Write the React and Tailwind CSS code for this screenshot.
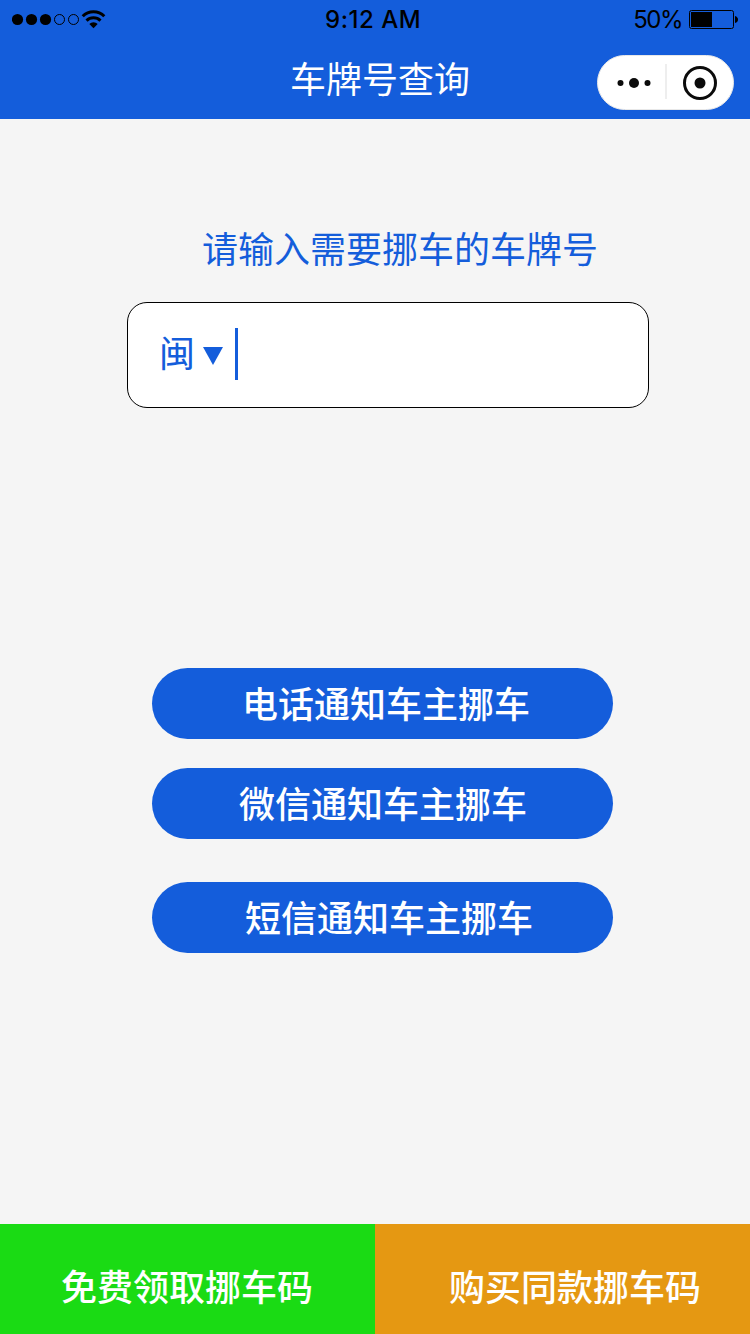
import { useState } from "react";

const notifyButtons = [
  { id: "phone", label: "电话通知车主挪车", className: "pl-[90px]" },
  { id: "wechat", label: "微信通知车主挪车", className: "mt-[29px] pl-[87px]" },
  { id: "sms", label: "短信通知车主挪车", className: "mt-[43px] pl-[93px]" },
];

function StatusBar() {
  return (
    <div className="flex h-10 items-start justify-between pl-3 pr-3 font-['Inter',sans-serif] text-black">
      <svg width="96" height="40" viewBox="12 0 96 40">
        <circle cx="17.5" cy="19.5" r="5.6" />
        <circle cx="31.5" cy="19.5" r="5.6" />
        <circle cx="45.5" cy="19.5" r="5.6" />
        <circle cx="59.5" cy="19.5" r="5" fill="none" stroke="#000" />
        <circle cx="73.5" cy="19.5" r="5" fill="none" stroke="#000" />
        <path d="M82.7 16.3a15 15 0 0 1 21.6 0" fill="none" stroke="#000" strokeWidth="3" />
        <path d="M86.5 20.6a10 10 0 0 1 14 0" fill="none" stroke="#000" strokeWidth="3" />
        <path d="M89.3 24a6 6 0 0 1 8.4 0l-4.2 4.2z" />
      </svg>
      <span className="ml-[5px] text-[24px] leading-10 font-medium tracking-[0.5px]">9:12 AM</span>
      <div className="flex items-center gap-[7px]">
        <span className="text-[24px] leading-10 tracking-[-1.5px]">50%</span>
        <svg width="49" height="40" viewBox="689 0 49 40">
          <rect x="689.5" y="10.5" width="44" height="18" rx="2" fill="none" stroke="#000" />
          <rect x="691" y="12" width="21" height="15" />
          <path d="M735 16q3 1 3 3.5t-3 3.5z" />
        </svg>
      </div>
    </div>
  );
}

function NavBar() {
  return (
    <div className="flex h-[79px] items-start justify-between pl-[290px] pr-4">
      <h1 className="mt-[11px] text-[36px] leading-[52px] text-white">车牌号查询</h1>
      <div className="mt-[15px] flex h-[55px] w-[137px] items-center rounded-full border border-[#e8e8e8] bg-white">
        <button className="flex h-full w-[67px] items-center justify-center pl-[5px]">
          <svg width="34" height="12" viewBox="0 0 34 12" fill="#0b0b0b">
            <circle cx="3.5" cy="6" r="3" />
            <circle cx="17" cy="6" r="5" />
            <circle cx="30.5" cy="6" r="3" />
          </svg>
        </button>
        <div className="-mt-[2px] h-[35px] w-[2px] bg-[#eeeeee]" />
        <button className="flex h-full flex-1 items-center justify-center pr-px">
          <svg width="34" height="34" viewBox="0 0 34 34">
            <circle cx="17" cy="17" r="15.5" fill="none" stroke="#0b0b0b" strokeWidth="3" />
            <circle cx="17" cy="17" r="5.5" fill="#0b0b0b" />
          </svg>
        </button>
      </div>
    </div>
  );
}

export default function App() {
  const [province] = useState("闽");

  return (
    <div className="flex h-[1334px] w-[750px] flex-col bg-[#f5f5f5] font-['Noto_Sans_CJK_SC',sans-serif] text-[36px] leading-[52px]">
      <header className="h-[119px] bg-[#145ddb]">
        <StatusBar />
        <NavBar />
      </header>

      <main className="flex-1">
        <p className="mt-[102px] pl-[202px] text-[#145ddb]">请输入需要挪车的车牌号</p>

        {/* plate number input */}
        <div className="mt-[29px] ml-[127px] flex h-[106px] w-[522px] rounded-[20px] border border-black bg-white pl-[31px] text-[#145ddb]">
          <button className="flex h-[98px] items-center">
            <span className="-mt-[3px]">{province}</span>
            <svg className="mt-2 ml-2" width="20" height="18" viewBox="0 0 20 18">
              <path d="M0 0h20L10 18z" fill="currentColor" />
            </svg>
          </button>
          <div className="mt-[25px] ml-3 h-[52px] w-[3px] bg-[#145ddb]" />
        </div>

        <div className="mt-[260px] ml-[152px] flex w-[461px] flex-col">
          {notifyButtons.map((item) => (
            <button
              key={item.id}
              className={`h-[71px] rounded-full bg-[#145ddb] pb-[3px] text-left font-medium text-white ${item.className}`}
            >
              {item.label}
            </button>
          ))}
        </div>
      </main>

      <footer className="grid h-[110px] grid-cols-2 font-medium text-white">
        <button className="bg-[#1adb14] pt-[11px] pl-[61px] text-left">免费领取挪车码</button>
        <button className="bg-[#e59812] pt-[11px] pl-[74px] text-left">购买同款挪车码</button>
      </footer>
    </div>
  );
}
